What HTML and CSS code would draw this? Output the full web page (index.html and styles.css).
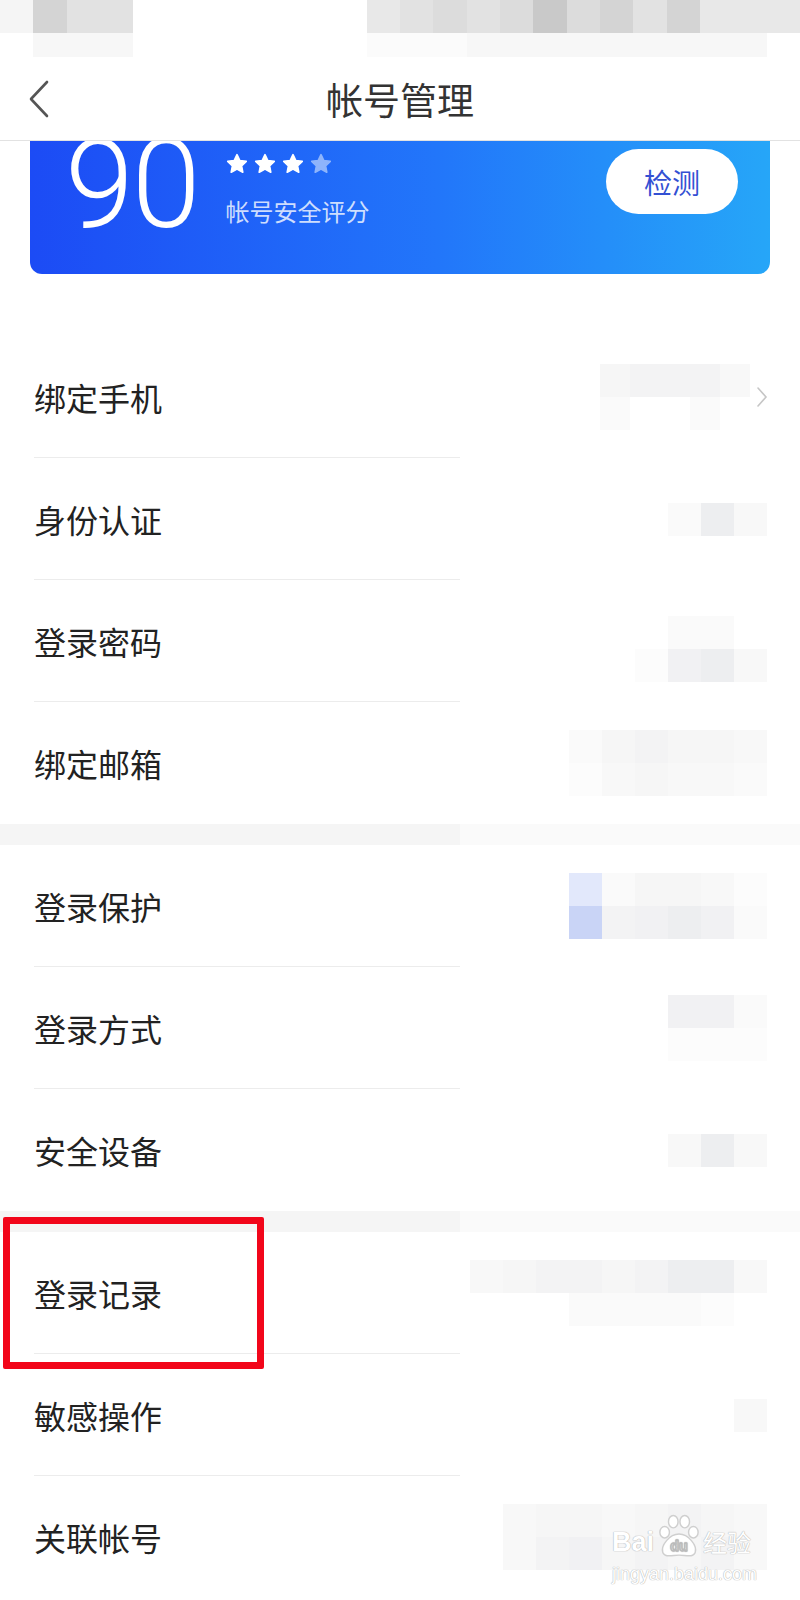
FILE: index.html
```html
<!DOCTYPE html>
<html lang="zh-CN">
<head>
  <meta charset="UTF-8">
  <title>帐号管理</title>
  <link rel="stylesheet" href="styles.css">
</head>
<body>

  <div class="statusbar">
    <i class="s1"></i><i class="s5"></i><i class="s3"></i><i class="s3"></i>
    <i></i><i></i><i></i><i></i><i></i><i></i><i></i>
    <i class="s2"></i><i class="s3"></i><i class="s4"></i><i class="s3"></i><i class="s4"></i>
    <i class="s6"></i><i class="s4"></i><i class="s5"></i><i class="s3"></i><i class="s5"></i>
    <i class="s2"></i><i class="s2"></i><i class="s2"></i>

    <i></i><i class="s7"></i><i class="s7"></i><i class="s7"></i>
    <i></i><i></i><i></i><i></i><i></i><i></i><i></i>
    <i class="s8"></i><i class="s8"></i><i class="s8"></i>
    <i class="s7"></i><i class="s7"></i><i class="s7"></i><i class="s7"></i><i class="s7"></i>
    <i class="s7"></i><i class="s7"></i><i class="s7"></i><i class="s7"></i><i></i>
  </div>

  <div class="topbar">
    <a class="back" href="#">
      <svg width="24" height="40" viewBox="0 0 24 40"><path d="M20 3 L4 20 L20 37" fill="none" stroke="#555" stroke-width="2.6" stroke-linecap="round" stroke-linejoin="round"/></svg>
    </a>
    <h1 class="title">帐号管理</h1>
    <span></span>
  </div>

  <div class="score-card">
    <div class="score">90</div>
    <div class="score-info">
      <div class="stars">
        <svg viewBox="0 0 24 24"><path class="star" d="M12 1.8l3.1 6.4 7 .9-5.1 4.9 1.3 7L12 17.6 5.7 21l1.3-7-5.1-4.9 7-.9z"/></svg>
        <svg viewBox="0 0 24 24"><path class="star" d="M12 1.8l3.1 6.4 7 .9-5.1 4.9 1.3 7L12 17.6 5.7 21l1.3-7-5.1-4.9 7-.9z"/></svg>
        <svg viewBox="0 0 24 24"><path class="star" d="M12 1.8l3.1 6.4 7 .9-5.1 4.9 1.3 7L12 17.6 5.7 21l1.3-7-5.1-4.9 7-.9z"/></svg>
        <svg viewBox="0 0 24 24"><path class="star off" d="M12 1.8l3.1 6.4 7 .9-5.1 4.9 1.3 7L12 17.6 5.7 21l1.3-7-5.1-4.9 7-.9z"/></svg>
      </div>
      <div class="score-label">帐号安全评分</div>
    </div>
    <button class="check-btn">检测</button>
  </div>

  <div class="list">
    <div class="group">
      <div class="row">
        <div class="row-name">绑定手机</div>
        <div class="row-value">
          <div class="blur narrow">
            <div><i class="k4"></i><i class="k5"></i><i class="k5"></i><i class="k5"></i><i class="k3"></i></div>
            <div><i class="k2"></i><i></i><i></i><i class="k2"></i><i></i></div>
          </div>
          <svg class="arrow" width="12" height="22" viewBox="0 0 12 22"><path d="M2 2 L10 11 L2 20" fill="none" stroke="#c6c6c6" stroke-width="1.6" stroke-linecap="round"/></svg>
        </div>
      </div>
      <div class="row">
        <div class="row-name">身份认证</div>
        <div class="row-value">
          <div class="blur">
            <div><i class="k2"></i><i class="k7"></i><i class="k3"></i></div>
          </div>
        </div>
      </div>
      <div class="row">
        <div class="row-name">登录密码</div>
        <div class="row-value">
          <div class="blur low">
            <div><i></i><i class="k2"></i><i class="k2"></i><i></i></div>
            <div><i class="k1"></i><i class="k6"></i><i class="k7"></i><i class="k3"></i></div>
          </div>
        </div>
      </div>
      <div class="row">
        <div class="row-name">绑定邮箱</div>
        <div class="row-value">
          <div class="blur">
            <div><i class="k2"></i><i class="k4"></i><i class="k5"></i><i class="k4"></i><i class="k4"></i><i class="k3"></i></div>
            <div><i class="k1"></i><i class="k3"></i><i class="k4"></i><i class="k3"></i><i class="k3"></i><i class="k2"></i></div>
          </div>
        </div>
      </div>
    </div>

    <div class="gap"></div>

    <div class="group">
      <div class="row">
        <div class="row-name">登录保护</div>
        <div class="row-value">
          <div class="blur">
            <div><i class="b1"></i><i class="k2"></i><i class="k4"></i><i class="k4"></i><i class="k3"></i><i class="k1"></i></div>
            <div><i class="b2"></i><i class="k5"></i><i class="k6"></i><i class="k7"></i><i class="k6"></i><i class="k2"></i></div>
          </div>
        </div>
      </div>
      <div class="row">
        <div class="row-name">登录方式</div>
        <div class="row-value">
          <div class="blur">
            <div><i class="k6"></i><i class="k6"></i><i class="k2"></i></div>
            <div><i class="k1"></i><i class="k1"></i><i class="k1"></i></div>
          </div>
        </div>
      </div>
      <div class="row">
        <div class="row-name">安全设备</div>
        <div class="row-value">
          <div class="blur">
            <div><i class="k3"></i><i class="k7"></i><i class="k3"></i></div>
          </div>
        </div>
      </div>
    </div>

    <div class="gap"></div>

    <div class="group">
      <div class="row picked">
        <div class="row-name">登录记录</div>
        <div class="row-value">
          <div class="blur">
            <div><i class="k3"></i><i class="k4"></i><i class="k5"></i><i class="k5"></i><i class="k4"></i><i class="k5"></i><i class="k7"></i><i class="k7"></i><i class="k3"></i></div>
            <div><i></i><i></i><i></i><i class="k2"></i><i class="k2"></i><i class="k2"></i><i class="k2"></i><i class="k1"></i><i></i></div>
          </div>
        </div>
        <div class="mark"></div>
      </div>
      <div class="row">
        <div class="row-name">敏感操作</div>
        <div class="row-value">
          <div class="blur">
            <div><i class="k3"></i></div>
          </div>
        </div>
      </div>
      <div class="row">
        <div class="row-name">关联帐号</div>
        <div class="row-value">
          <div class="blur">
            <div><i class="k3"></i><i class="k4"></i><i class="k4"></i><i class="k3"></i><i class="k4"></i><i class="k5"></i><i class="k4"></i><i class="k3"></i></div>
            <div><i class="k3"></i><i class="k5"></i><i class="k6"></i><i class="k4"></i><i class="k5"></i><i class="k4"></i><i class="k5"></i><i class="k3"></i></div>
          </div>
        </div>
        <div class="watermark">
          <div class="wm-logo">
            <span>Bai</span>
            <svg width="46" height="44" viewBox="0 0 48 46">
              <ellipse cx="9" cy="19" rx="5" ry="6" class="paw"/>
              <ellipse cx="18" cy="8" rx="5" ry="6.5" class="paw"/>
              <ellipse cx="30" cy="8" rx="5" ry="6.5" class="paw"/>
              <ellipse cx="39" cy="19" rx="5" ry="6" class="paw"/>
              <path d="M24 21 C14 21 5 33 7 40 C9 46 17 43 24 43 C31 43 39 46 41 40 C43 33 34 21 24 21 Z" class="paw"/>
              <text x="24" y="39" text-anchor="middle" class="paw-text">du</text>
            </svg>
            <span>经验</span>
          </div>
          <div class="wm-url">jingyan.baidu.com</div>
        </div>
      </div>
    </div>
  </div>

</body>
</html>
```

FILE: styles.css
```css
body {
  margin: 0;
  width: 800px;
  font-family: "Noto Sans CJK SC", sans-serif;
  background: #fff;
  color: #222;
}

/* status bar (pixelated in the screenshot) */
.statusbar {
  height: 57px;
  display: grid;
  grid-template-columns: repeat(24, 1fr);
  grid-template-rows: 33px 24px;
}
.statusbar i { display: block; }
.s1 { background: #f5f5f5; }
.s2 { background: #e8e8e8; }
.s3 { background: #e2e2e2; }
.s4 { background: #dcdcdc; }
.s5 { background: #d4d4d4; }
.s6 { background: #c9c9c9; }
.s7 { background: #f7f7f7; }
.s8 { background: #fbfbfb; }

.topbar {
  height: 83px;
  border-bottom: 1px solid #e2e2e2;
  display: grid;
  grid-template-columns: 80px 1fr 80px;
  align-items: center;
}
.back {
  display: flex;
  padding-left: 27px;
}
.title {
  margin: 0;
  text-align: center;
  font-size: 37px;
  font-weight: 400;
  color: #333;
}

/* score card */
.score-card {
  margin: 0 30px;
  height: 133px;
  overflow: hidden;
  border-radius: 0 0 12px 12px;
  background: linear-gradient(90deg, #1c4bf5 0%, #2276fa 55%, #26a6f8 100%);
  display: flex;
  align-items: flex-start;
  padding: 0 32px 0 35px;
  box-sizing: border-box;
}
.score {
  font-family: Roboto, sans-serif;
  font-weight: 300;
  font-size: 124px;
  line-height: 1;
  color: #fff;
  margin-top: -18px;
  letter-spacing: -2px;
}
.score-info {
  margin-left: 27px;
  padding-top: 12px;
}
.stars {
  display: flex;
  gap: 6px;
  height: 22px;
}
.stars svg {
  width: 22px;
  height: 22px;
}
.star {
  fill: #fff;
  stroke: #fff;
  stroke-width: 1.8;
  stroke-linejoin: round;
}
.star.off {
  fill: #8eb4fb;
  stroke: #8eb4fb;
}
.score-label {
  margin-top: 24px;
  font-size: 24px;
  line-height: 24px;
  color: rgba(255, 255, 255, 0.78);
}
.check-btn {
  margin-left: auto;
  margin-top: 8px;
  width: 132px;
  height: 65px;
  border: none;
  border-radius: 33px;
  background: #fff;
  color: #3350d3;
  font-family: "Noto Sans CJK SC", sans-serif;
  font-size: 28px;
  padding: 0;
}

/* list */
.list {
  padding-top: 62px;
}
.row {
  display: flex;
  height: 122px;
  padding-left: 34px;
}
.row-name {
  flex: 0 0 426px;
  display: flex;
  align-items: center;
  font-size: 32px;
  border-bottom: 1px solid #ececec;
  box-sizing: border-box;
}
.group .row:last-child .row-name {
  border-bottom: none;
}
.row-value {
  flex: 1;
  display: flex;
  align-items: center;
  justify-content: flex-end;
  padding-right: 33px;
}
.gap {
  height: 21px;
  background: linear-gradient(90deg, #f5f5f5 460px, #fafafa 460px);
}

/* blurred right-side values */
.blur div {
  display: flex;
}
.blur i {
  display: block;
  width: 33px;
  height: 33px;
}
.blur.narrow i { width: 30px; }
.blur.low { margin-top: 16px; }
.arrow {
  margin-left: 6px;
  margin-right: -1px;
}
.k1 { background: #fcfcfc; }
.k2 { background: #fafafa; }
.k3 { background: #f8f8f8; }
.k4 { background: #f6f6f6; }
.k5 { background: #f3f3f4; }
.k6 { background: #f1f1f3; }
.k7 { background: #edeef0; }
.b1 { background: #e2e8fb; }
.b2 { background: #c9d4f6; }

/* red annotation box */
.picked {
  position: relative;
}
.mark {
  position: absolute;
  left: 3px;
  top: -15px;
  width: 261px;
  height: 152px;
  border: 7px solid #f2061a;
  border-radius: 2px;
  box-sizing: border-box;
}

/* watermark */
.row:last-child {
  position: relative;
}
.watermark {
  position: absolute;
  left: 612px;
  top: 38px;
  color: #fff;
  text-shadow: 0 0 1px #b0b0b0, 0 0 1px #b0b0b0;
}
.wm-logo {
  display: flex;
  align-items: flex-end;
  font-family: "Liberation Sans", sans-serif;
  font-weight: bold;
  font-size: 27px;
  line-height: 26px;
}
.wm-logo span:last-child {
  font-family: "Noto Sans CJK SC", sans-serif;
  font-weight: 400;
  font-size: 24px;
  line-height: 26px;
}
.wm-logo svg {
  margin: 0 1px -3px 2px;
}
.paw {
  fill: #fff;
  stroke: #cfcfcf;
  stroke-width: 1.5;
}
.paw-text {
  font-family: "Liberation Sans", sans-serif;
  font-size: 15px;
  font-weight: bold;
  fill: #fff;
  stroke: #bdbdbd;
  stroke-width: 0.8;
}
.wm-url {
  margin-top: 10px;
  font-family: "Liberation Sans", sans-serif;
  font-size: 18px;
  line-height: 18px;
}
```
